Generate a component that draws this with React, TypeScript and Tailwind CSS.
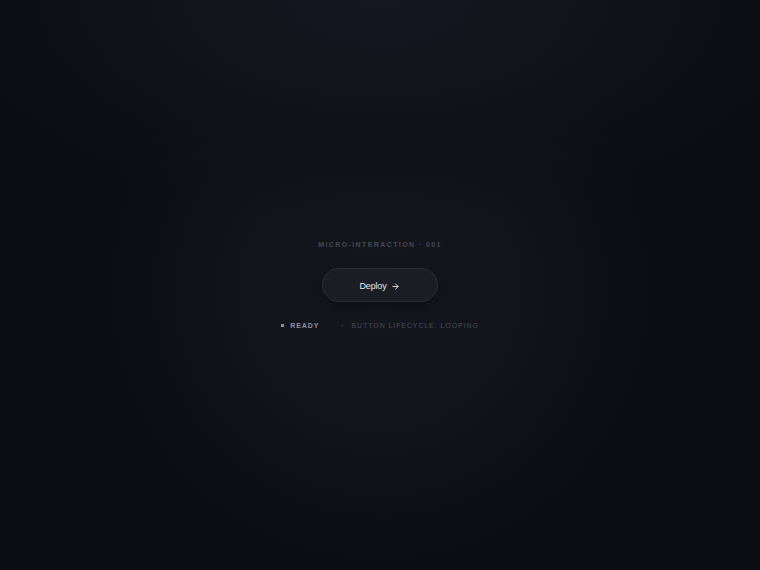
import { ArrowRight } from 'lucide-react';

export default function App() {
  return (
    <div
      className="w-full h-[570px] overflow-hidden flex flex-col items-center pt-[241px] bg-[#0b0d12] bg-[radial-gradient(ellipse_60%_40%_at_50%_0%,#151821_0%,#0f1117_60%,transparent_100%),radial-gradient(circle_at_50%_51%,#15171e_0%,#111319_30%,#0b0d12_60%)]"
      style={{ fontFamily: '"Liberation Sans", Arial, sans-serif' }}
    >
      <span className="text-[7px] font-bold tracking-[0.2em] text-[#454955] leading-none">
        MICRO-INTERACTION · 001
      </span>
      <button className="mt-[20px] w-[116px] h-[34px] rounded-full bg-[#1b1d24] border border-[#2b2e37] shadow-[0_4px_12px_rgba(0,0,0,0.45)] flex items-center justify-center gap-[5px] text-[9px] text-[#e4e6eb] pt-[3px]">
        <span className="tracking-[-0.02em]">Deploy</span>
        <ArrowRight className="w-[9px] h-[9px]" strokeWidth={2.5} />
      </button>
      <div className="mt-[20px] flex items-center text-[7px] tracking-[0.13em] leading-none">
        <span className="w-[3px] h-[3px] bg-[#8b8f99] mr-[6px]" />
        <span className="font-bold text-[#8d919b]">READY</span>
        <span className="ml-[22px] text-[#5a5f6b] font-bold">·</span>
        <span className="ml-[7px] text-[#474b57]">BUTTON LIFECYCLE. LOOPING</span>
      </div>
    </div>
  );
}
